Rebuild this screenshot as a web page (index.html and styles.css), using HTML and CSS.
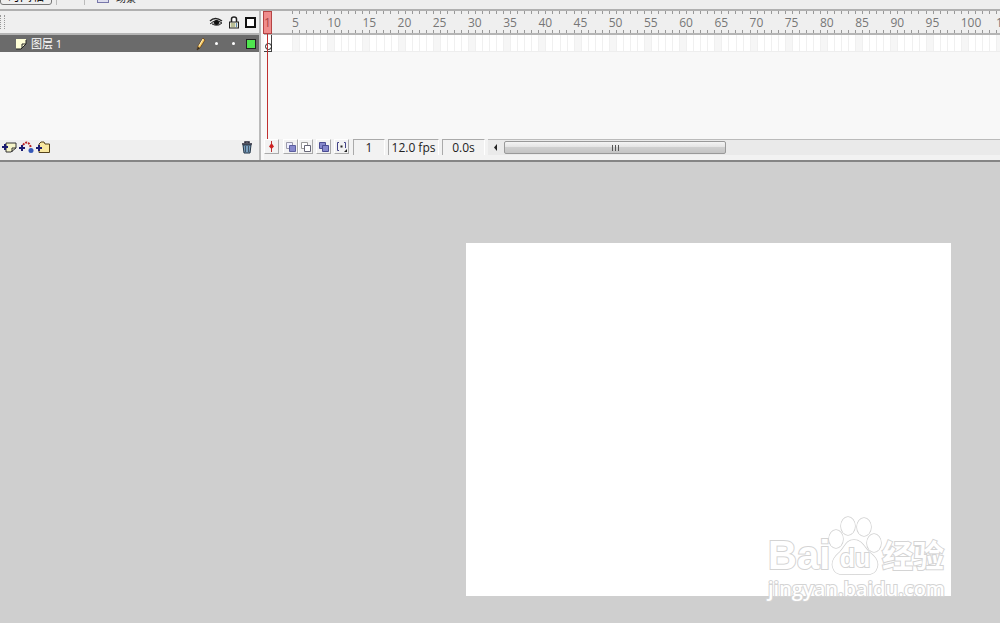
FILE: index.html
```
<!DOCTYPE html>
<html lang="zh-CN">
<head>
    <meta charset="UTF-8">
    <meta name="viewport" content="width=device-width, initial-scale=1.0">
    <title>时间轴</title>
    <link rel="stylesheet" href="styles.css">
</head>
<body>

    <!-- Toolbar -->
    <header class="toolbar">
        <button class="timeline-button">时间轴</button>
        <span class="separator"></span>
        <span class="separator wide"></span>
        <span class="scene"><i class="scene-icon"></i>场景</span>
    </header>

    <!-- Timeline -->
    <section class="timeline">
        <div class="layers">
            <div class="layers-head">
                <span class="grip"></span>
                <svg class="icon" width="14" height="12" viewBox="0 0 14 12">
                    <path d="M1 5Q6 0 13 5" fill="none" stroke="#222" stroke-width="1.500"/>
                    <path d="M1 8Q7 2 13 7L10 9Q6 10 3 8" fill="#aaa" stroke="#333"/>
                    <circle cx="7.500" cy="6.500" r="2.500" fill="#111"/>
                </svg>
                <svg class="icon" width="12" height="13" viewBox="0 0 12 13">
                    <path d="M3.500 6V3Q3.500 1 6 1T8.500 3V6" fill="#fff" stroke="#222" stroke-width="1.500"/>
                    <rect x="1.500" y="6" width="9" height="6" fill="#e8ead8" stroke="#222"/>
                    <path d="M3 8H7M3 10H7" stroke="#8a9150"/>
                    <path d="M8.500 7V11" stroke="#5b87b5"/>
                </svg>
                <span class="outline-box"></span>
            </div>
            <div class="layer">
                <svg class="page-icon" width="12" height="12" viewBox="0 0 12 12">
                    <path d="M1 1H11V6L6 11H1Z" fill="#ffffd8"/>
                    <path d="M11 2V6L6 11H1M11 6H7V10" fill="none" stroke="#222"/>
                </svg>
                <span class="layer-name">图层 1</span>
                <svg class="pencil" width="10" height="14" viewBox="0 0 10 14">
                    <path d="M7 1L9 3L4 11L1 13L2 9Z" fill="#f5c65a" stroke="#5a3517" stroke-width=".7"/>
                    <path d="M7 2L3 9" stroke="#fff2c2"/>
                    <path d="M1 13L2 10L4 11Z" fill="#222"/>
                </svg>
                <span class="dot"></span>
                <span class="dot"></span>
                <span class="layer-color"></span>
            </div>
            <div class="layers-space"></div>
            <div class="layers-foot">
                <button class="tool" aria-label="插入图层">
                    <svg width="15" height="13" viewBox="0 0 15 13">
                        <path d="M4 2H14V7L9 11H4Z" fill="#f5f4c8" stroke="#333"/>
                        <path d="M14 7H10V11" fill="none" stroke="#333"/>
                        <path d="M0 6H6M3 3V9" stroke="#1b1b70" stroke-width="2"/>
                    </svg>
                </button>
                <button class="tool" aria-label="添加引导层">
                    <svg width="15" height="13" viewBox="0 0 15 13">
                        <path d="M4 4Q8-1 11 4L12 7" fill="none" stroke="#b22" stroke-width="2" stroke-dasharray="2 1"/>
                        <circle cx="12" cy="9.500" r="2.500" fill="#3558b8"/>
                        <path d="M0 7H6M3 4V10" stroke="#1b1b70" stroke-width="2"/>
                    </svg>
                </button>
                <button class="tool" aria-label="插入图层文件夹">
                    <svg width="15" height="13" viewBox="0 0 15 13">
                        <path d="M3 3L5 1H8L9 3H13.500V11.500H3Z" fill="#f8e7a0" stroke="#54421c"/>
                        <path d="M0 7H6M3 4V10" stroke="#1b1b70" stroke-width="2"/>
                    </svg>
                </button>
                <button class="tool trash" aria-label="删除图层">
                    <svg width="12" height="13" viewBox="0 0 12 13">
                        <path d="M4 2V1H8V2M1 3H11" fill="none" stroke="#223" stroke-width="1.500"/>
                        <path d="M2 4H10L9 12H3Z" fill="#7aa0c0" stroke="#234"/>
                        <path d="M4.500 5V11M7.500 5V11" stroke="#456"/>
                    </svg>
                </button>
            </div>
        </div>

        <div class="frames">
            <div class="ruler" id="ruler"></div>
            <div class="frame-row" id="frame-row"></div>
            <div class="frames-space"></div>
            <div class="keyframe"></div>
            <div class="playhead"><div class="playhead-top">1</div><div class="playhead-line"></div></div>
            <div class="status">
                <button class="tool raised" aria-label="滚动到播放头">
                    <svg width="13" height="13" viewBox="0 0 13 13"><path d="M6.500 1V12" stroke="#b33"/><path d="M6.500 3L9 6.500L6.500 9L4 6.500Z" fill="#c22"/></svg>
                </button>
                <button class="tool raised group" aria-label="绘图纸外观">
                    <svg width="13" height="13" viewBox="0 0 13 13"><path d="M2.500 2.500H8.500V8.500H2.500Z" fill="#eef" stroke="#99a"/><path d="M5.500 5.500H11.500V11.500H5.500Z" fill="#8688cc" stroke="#5c5e9e"/></svg>
                </button>
                <button class="tool raised" aria-label="绘图纸外观轮廓">
                    <svg width="13" height="13" viewBox="0 0 13 13"><path d="M2.500 2.500H8.500V8.500H2.500Z" fill="#fff" stroke="#999"/><path d="M5.500 5.500H11.500V11.500H5.500Z" fill="#fff" stroke="#667"/></svg>
                </button>
                <button class="tool raised spaced" aria-label="编辑多个帧">
                    <svg width="13" height="13" viewBox="0 0 13 13"><path d="M2.500 2.500H8.500V8.500H2.500Z" fill="#8688cc" stroke="#4b4d93"/><path d="M5.500 5.500H11.500V11.500H5.500Z" fill="#8688cc" stroke="#4b4d93"/></svg>
                </button>
                <button class="tool raised spaced" aria-label="修改绘图纸标记">
                    <svg width="13" height="13" viewBox="0 0 13 13"><path d="M4 2.500H2.500V10.500H4M9 2.500H10.500V8" fill="none" stroke="#448"/><path d="M5.500 6.500H7.500" stroke="#222" stroke-width="2"/><path d="M12 9V12H9Z" fill="#222"/></svg>
                </button>
                <span class="field small">1</span>
                <span class="field large">12.0 fps</span>
                <span class="field">0.0s</span>
                <div class="scrollbar">
                    <button class="scroll-left" aria-label="向左滚动"><svg width="5" height="7" viewBox="0 0 5 7"><path d="M4 0V7L1 3.500Z" fill="#222"/></svg></button>
                    <div class="thumb"><i></i><i></i><i></i></div>
                </div>
            </div>
        </div>
    </section>

    <!-- Work area -->
    <main class="workspace">
        <div class="stage">
            <div class="watermark">
                <div class="brand">
                    <span class="bai">Bai</span>
                    <span class="paw">
                        <svg width="54" height="60" viewBox="0 0 54 60">
                            <g fill="#fff" stroke="#d0d0d0" stroke-width="1.500">
                                <ellipse cx="8" cy="23" rx="7" ry="9"/>
                                <ellipse cx="20" cy="10" rx="7" ry="9"/>
                                <ellipse cx="36" cy="11" rx="7" ry="9"/>
                                <ellipse cx="46" cy="27" rx="7" ry="9"/>
                                <path d="M26 24C34 24 36 31 41 36C48 41 52 47 48 54C45 60 36 58 27 58C18 58 9 60 6 54C2 47 6 41 12 36C17 31 18 24 26 24Z"/>
                            </g>
                        </svg>
                        <span class="du">du</span>
                    </span>
                    <span class="jingyan">经验</span>
                </div>
                <div class="address">jingyan.baidu.com</div>
            </div>
        </div>
    </main>

    <script>
        const ruler = document.getElementById('ruler');
        const frameRow = document.getElementById('frame-row');

        // 25 frames per block, one label every 5 frames
        for (let start = 5; start < 500; start += 25) {
            const labels = document.createElement('div');
            const cells = document.createElement('div');
            labels.className = 'block';
            cells.className = 'block';
            for (let n = start; n < start + 25; n += 5) {
                labels.innerHTML += `<span class="ticks">${n}</span>`;
                cells.innerHTML += '<span class="cells"></span>';
            }
            ruler.appendChild(labels);
            frameRow.appendChild(cells);
        }
    </script>

</body>
</html>
```
FILE: styles.css
```
* {
    margin: 0;
    padding: 0;
    box-sizing: border-box;
}

body {
    display: flex;
    flex-direction: column;
    min-height: 100vh;
    background: #cfcfcf;
    font-family: "Open Sans", "Noto Sans CJK SC", sans-serif;
    font-size: 12px;
    color: #222;
    overflow: hidden;
}

button {
    border: none;
    background: none;
    font: inherit;
}

svg {
    display: block;
}

/* Toolbar */
.toolbar {
    display: flex;
    align-items: flex-end;
    height: 11px;
    padding-bottom: 4px;
    background: #eee;
    border-bottom: 2px solid #b0b0b0;
    overflow: hidden;
}

.timeline-button {
    width: 52px;
    height: 22px;
    padding-top: 5px;
    border: 1px solid #777;
    border-radius: 3px;
    line-height: 14px;
}

.separator {
    width: 5px;
    height: 6px;
    border-right: 1px solid #bbb;
}

.separator.wide {
    width: 28px;
}

.scene {
    display: flex;
    align-items: flex-end;
    gap: 7px;
    margin-left: 12px;
    line-height: 13px;
    font-size: 10px;
}

.scene-icon {
    width: 12px;
    height: 12px;
    margin-bottom: 2px;
    border: 1px solid #77a;
    background: #dde;
}

/* Timeline */
.timeline {
    display: flex;
    height: 151px;
    background: #f8f8f8;
    border-bottom: 2px solid #858585;
}

.layers {
    display: flex;
    flex-direction: column;
    width: 261px;
    border-right: 2px solid #bbb;
}

.layers-head {
    display: flex;
    align-items: center;
    justify-content: flex-end;
    gap: 5px;
    height: 24px;
    padding-right: 3px;
    background: #efefef;
    border-bottom: 2px solid #b5b5b5;
}

.grip {
    width: 5px;
    height: 14px;
    margin-right: auto;
    border-left: 1px dotted #999;
    border-right: 1px dotted #999;
}

.outline-box {
    width: 11px;
    height: 11px;
    border: 2px solid #111;
    background: #fff;
}

.layer {
    display: flex;
    align-items: center;
    height: 17px;
    padding: 0 3px 0 15px;
    background: #6b6b6b;
    color: #fff;
}

.layer-name {
    flex: 1;
    margin-left: 4px;
    font-size: 11px;
    line-height: 17px;
}

.pencil {
    margin-right: 9px;
}

.dot {
    width: 3px;
    height: 3px;
    margin-right: 14px;
    border-radius: 50%;
    background: #fff;
}

.layer-color {
    width: 10px;
    height: 10px;
    margin-left: -3px;
    border: 1px solid #222;
    background: #4fe64f;
}

.layers-space {
    flex: 1;
}

.layers-foot {
    display: flex;
    align-items: center;
    gap: 2px;
    height: 20px;
    padding: 0 6px 5px 2px;
    background: #efefef;
}

.trash {
    margin-left: auto;
}

/* Frames */
.frames {
    position: relative;
    display: flex;
    flex: 1;
    flex-direction: column;
    min-width: 0;
    padding-left: 3px;
    overflow: hidden;
}

.ruler {
    display: flex;
    height: 24px;
    padding-left: 28px;
    background: #efefef;
    border-bottom: 2px solid #b5b5b5;
}

.block {
    display: flex;
    flex: none;
    width: 176px;
}

.ticks {
    flex: 0 0 20%;
    line-height: 23px;
    white-space: nowrap;
    color: #777;
    background:
        repeating-linear-gradient(to right, #999 0 1px, transparent 1px 20%) top / 100% 3px no-repeat,
        repeating-linear-gradient(to right, #999 0 1px, transparent 1px 20%) bottom / 100% 3px no-repeat;
}

.frame-row {
    display: flex;
    height: 17px;
    padding-left: 28px;
    background: #fff;
    border-bottom: 1px solid #eee;
}

.cells {
    flex: 0 0 20%;
    background:
        repeating-linear-gradient(to right, #f0f0f0 0 1px, transparent 1px 20%),
        linear-gradient(to right, #f6f6f6 20%, #fff 20%);
}

.frames-space {
    flex: 1;
}

.playhead {
    position: absolute;
    top: 0;
    left: 2px;
    width: 9px;
}

.playhead-top {
    height: 23px;
    border: 1px solid #b54444;
    background: #f08c8c;
    color: #a44;
    line-height: 21px;
    text-align: center;
}

.playhead-line {
    width: 1px;
    height: 105px;
    margin: 0 auto;
    background: #c03030;
}

.keyframe {
    position: absolute;
    top: 24px;
    left: 3px;
    width: 8px;
    height: 17px;
    border: 1px solid #444;
    border-width: 0 1px 1px 0;
}

.keyframe::after {
    content: "";
    position: absolute;
    bottom: 1px;
    left: 1px;
    width: 5px;
    height: 5px;
    border: 1px solid #222;
    border-radius: 50%;
}

.status {
    display: flex;
    height: 21px;
    padding-bottom: 5px;
    background: #f2f2f2;
}

.raised {
    width: 15px;
    height: 15px;
    border: 1px solid #bbb;
    border-color: #fff #aaa #aaa #fff;
}

.raised.group {
    margin-left: 4px;
}

.raised.spaced {
    margin-left: 3px;
}

.field {
    width: 43px;
    margin-right: 3px;
    border-top: 1px solid #aaa;
    border-left: 1px solid #aaa;
    border-right: 1px solid #fff;
    line-height: 16px;
    text-align: center;
}

.field.small {
    width: 32px;
    margin-left: 4px;
}

.field.large {
    width: 51px;
}

.scrollbar {
    display: flex;
    flex: 1;
    align-items: center;
    border-top: 1px solid #bbb;
    background: #eaeaea;
}

.scroll-left {
    padding: 0 6px 0 5px;
}

.thumb {
    display: flex;
    align-items: center;
    justify-content: center;
    gap: 2px;
    width: 222px;
    height: 13px;
    border: 1px solid #999;
    border-radius: 2px;
    background: linear-gradient(#f4f4f4, #e4e4e4 45%, #cfcfcf 50%, #c4c4c4);
}

.thumb i {
    width: 1px;
    height: 6px;
    background: #555;
}

/* Work area */
.workspace {
    flex: 1;
    display: flex;
    justify-content: flex-end;
    align-items: flex-start;
    padding: 81px 49px 27px 0;
}

.stage {
    position: relative;
    width: 485px;
    height: 353px;
    background: #fff;
}

/* Watermark over the corner of the stage */
.watermark {
    position: absolute;
    right: 3px;
    bottom: -6px;
    width: 180px;
    color: #fff;
    -webkit-text-stroke: 2px #d4d4d4;
    paint-order: stroke fill;
    font-weight: bold;
}

.brand {
    display: flex;
    align-items: flex-end;
    height: 60px;
}

.bai {
    width: 60px;
    font-family: "Liberation Sans", sans-serif;
    font-size: 40px;
    line-height: 42px;
}

.paw {
    position: relative;
}

.du {
    position: absolute;
    left: 0;
    right: 0;
    bottom: 4px;
    font-family: "Liberation Sans", sans-serif;
    font-size: 25px;
    line-height: 28px;
    text-align: center;
}

.jingyan {
    font-size: 31px;
    line-height: 42px;
}

.address {
    font-size: 20px;
    line-height: 26px;
    font-weight: 600;
}
```
